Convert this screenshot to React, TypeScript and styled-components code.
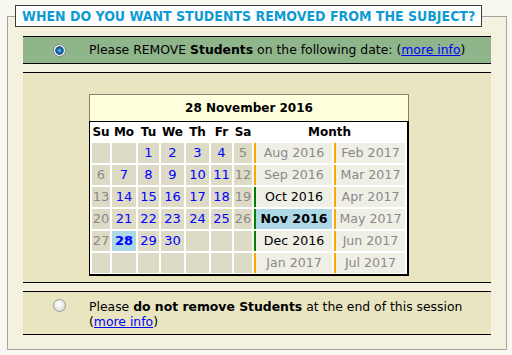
import React from "react";
import styled, { createGlobalStyle, css } from "styled-components";

const GlobalStyle = createGlobalStyle`
  html, body { margin: 0; padding: 0; }
  body {
    background: #f9f8f0;
    font-family: "DejaVu Sans", Verdana, sans-serif;
    font-size: 13px;
    color: #000;
  }
`;

const Fieldset = styled.fieldset`
  box-sizing: border-box;
  width: 500px;
  min-width: 0;
  margin: 5px 0 0 7px;
  padding: 0;
  border: 1px solid #a3a3a3;
  background: #f4f2df;
`;

const Legend = styled.legend`
  margin-left: 7px;
  padding: 0 6px;
  height: 20px;
  border: 1px solid #3c3c3c;
  background: #fff;
  color: #0e9ad4;
  font-family: "DejaVu Sans Condensed", "DejaVu Sans", sans-serif;
  font-stretch: condensed;
  font-weight: bold;
  font-size: 14px;
  line-height: 20px;
  white-space: nowrap;
`;

const Rows = styled.div`
  display: flex;
  flex-direction: column;
  gap: 8px;
  padding: 9px 15px 14px;
`;

const OptionRow = styled.div<{ $tone: "green" | "beige"; $align?: string }>`
  display: grid;
  grid-template-columns: 66px 1fr;
  align-items: ${(p) => p.$align || "start"};
  border-top: 1px solid #000;
  border-bottom: 1px solid #000;
  background: ${(p) => (p.$tone === "green" ? "#8fb58a" : "#e9e5c1")};
`;

const RadioCell = styled.div<{ $pad?: number }>`
  display: flex;
  padding-left: 30px;
  padding-top: ${(p) => p.$pad ?? 0}px;
`;

const Radio = styled.span<{ $checked?: boolean }>`
  display: block;
  box-sizing: border-box;
  width: 13px;
  height: 13px;
  border-radius: 50%;
  border: 1px solid #9a9a9a;
  background: radial-gradient(circle at 45% 40%, #ffffff 0%, #ececec 45%, #c9c9c9 100%);
  ${(p) =>
    p.$checked &&
    css`
      border-color: #8a8a8a;
      background: radial-gradient(
        circle at 50% 50%,
        #7fc4ee 0px,
        #2a84cc 1.5px,
        #0d4f92 3.5px,
        #3b6e9c 4px,
        #f2f2f2 4.6px,
        #dcdcdc 100%
      );
    `}
`;

const Text = styled.div<{ $pad?: string }>`
  padding: ${(p) => p.$pad || "0"};
  line-height: 15px;
  font-size: 12.4px;
`;

const Link = styled.a`
  color: #0000ff;
  text-decoration: underline;
`;

const CalendarCell = styled.div`
  padding: 21px 0 6px;
`;

const Calendar = styled.div`
  width: 320px;
`;

const CalTitle = styled.div`
  box-sizing: border-box;
  height: 27px;
  border: 1px solid #84846a;
  border-bottom: none;
  background: #ffffdd;
  text-align: center;
  font-weight: bold;
  font-size: 12px;
  line-height: 26px;
`;

const CalGrid = styled.div`
  display: grid;
  grid-template-columns: 18px 24px 21px 23px 23px 21px 18px 78px 71px;
  grid-template-rows: 17px repeat(6, 20px);
  gap: 2px;
  padding: 2px 2px 1px;
  background: #fff;
  border-style: solid;
  border-color: #000;
  border-width: 1px 2px 2px 1px;
`;

const HeadCell = styled.div<{ $span?: number }>`
  grid-column: span ${(p) => p.$span || 1};
  text-align: center;
  font-weight: bold;
  font-size: 12px;
  line-height: 17px;
  white-space: nowrap;
`;

const DayCell = styled.div<{ $tone: "blue" | "gray" | "none"; $selected?: boolean }>`
  background: ${(p) => (p.$selected ? "#add8e6" : "#dddac6")};
  color: ${(p) => (p.$tone === "blue" ? "#0000ff" : "#8a8a8a")};
  font-weight: ${(p) => (p.$selected ? "bold" : "normal")};
  text-align: center;
  font-size: 13px;
  line-height: 20px;
`;

const MonthCell = styled.div<{ $active?: boolean; $selected?: boolean }>`
  box-sizing: border-box;
  border-left: 2px solid ${(p) => (p.$active ? "#008000" : "#ffa500")};
  background: ${(p) => (p.$selected ? "#add8e6" : "#f0efe6")};
  color: ${(p) => (p.$active ? "#000" : "#8a8a8a")};
  font-weight: ${(p) => (p.$selected ? "bold" : "normal")};
  text-align: center;
  font-size: 12.6px;
  line-height: 20px;
  white-space: nowrap;
`;

const dayNames = ["Su", "Mo", "Tu", "We", "Th", "Fr", "Sa"];
const leftMonths = ["Aug 2016", "Sep 2016", "Oct 2016", "Nov 2016", "Dec 2016", "Jan 2017"];
const rightMonths = ["Feb 2017", "Mar 2017", "Apr 2017", "May 2017", "Jun 2017", "Jul 2017"];
const activeMonths = new Set(["Oct 2016", "Nov 2016", "Dec 2016"]);

const cells: (number | null)[] = [];
for (let i = 0; i < 42; i++) {
  const d = i - 1;
  cells.push(d >= 1 && d <= 30 ? d : null);
}

export default function App() {
  const rows = [0, 1, 2, 3, 4, 5];
  return (
    <>
      <GlobalStyle />
      <Fieldset>
        <Legend>WHEN DO YOU WANT STUDENTS REMOVED FROM THE SUBJECT?</Legend>
        <Rows>
          <OptionRow $tone="green" $align="center">
            <RadioCell>
              <Radio $checked />
            </RadioCell>
            <Text $pad="5px 0 6px">
              Please REMOVE <b>Students</b> on the following date: (<Link href="#">more info</Link>)
            </Text>
          </OptionRow>
          <OptionRow $tone="beige">
            <div />
            <CalendarCell>
              <Calendar>
                <CalTitle>28 November 2016</CalTitle>
                <CalGrid>
                  {dayNames.map((n) => (
                    <HeadCell key={n}>{n}</HeadCell>
                  ))}
                  <HeadCell $span={2}>Month</HeadCell>
                  {rows.map((r) => (
                    <React.Fragment key={r}>
                      {cells.slice(r * 7, r * 7 + 7).map((d, i) => {
                        const weekend = i === 0 || i === 6;
                        return (
                          <DayCell
                            key={i}
                            $tone={d === null ? "none" : weekend ? "gray" : "blue"}
                            $selected={d === 28}
                          >
                            {d ?? ""}
                          </DayCell>
                        );
                      })}
                      <MonthCell
                        $active={activeMonths.has(leftMonths[r])}
                        $selected={leftMonths[r] === "Nov 2016"}
                      >
                        {leftMonths[r]}
                      </MonthCell>
                      <MonthCell>{rightMonths[r]}</MonthCell>
                    </React.Fragment>
                  ))}
                </CalGrid>
              </Calendar>
            </CalendarCell>
          </OptionRow>
          <OptionRow $tone="beige">
            <RadioCell $pad={7}>
              <Radio />
            </RadioCell>
            <Text $pad="7px 0 5px">
              Please <b>do not remove Students</b> at the end of this session (
              <Link href="#">more info</Link>)
            </Text>
          </OptionRow>
        </Rows>
      </Fieldset>
    </>
  );
}
